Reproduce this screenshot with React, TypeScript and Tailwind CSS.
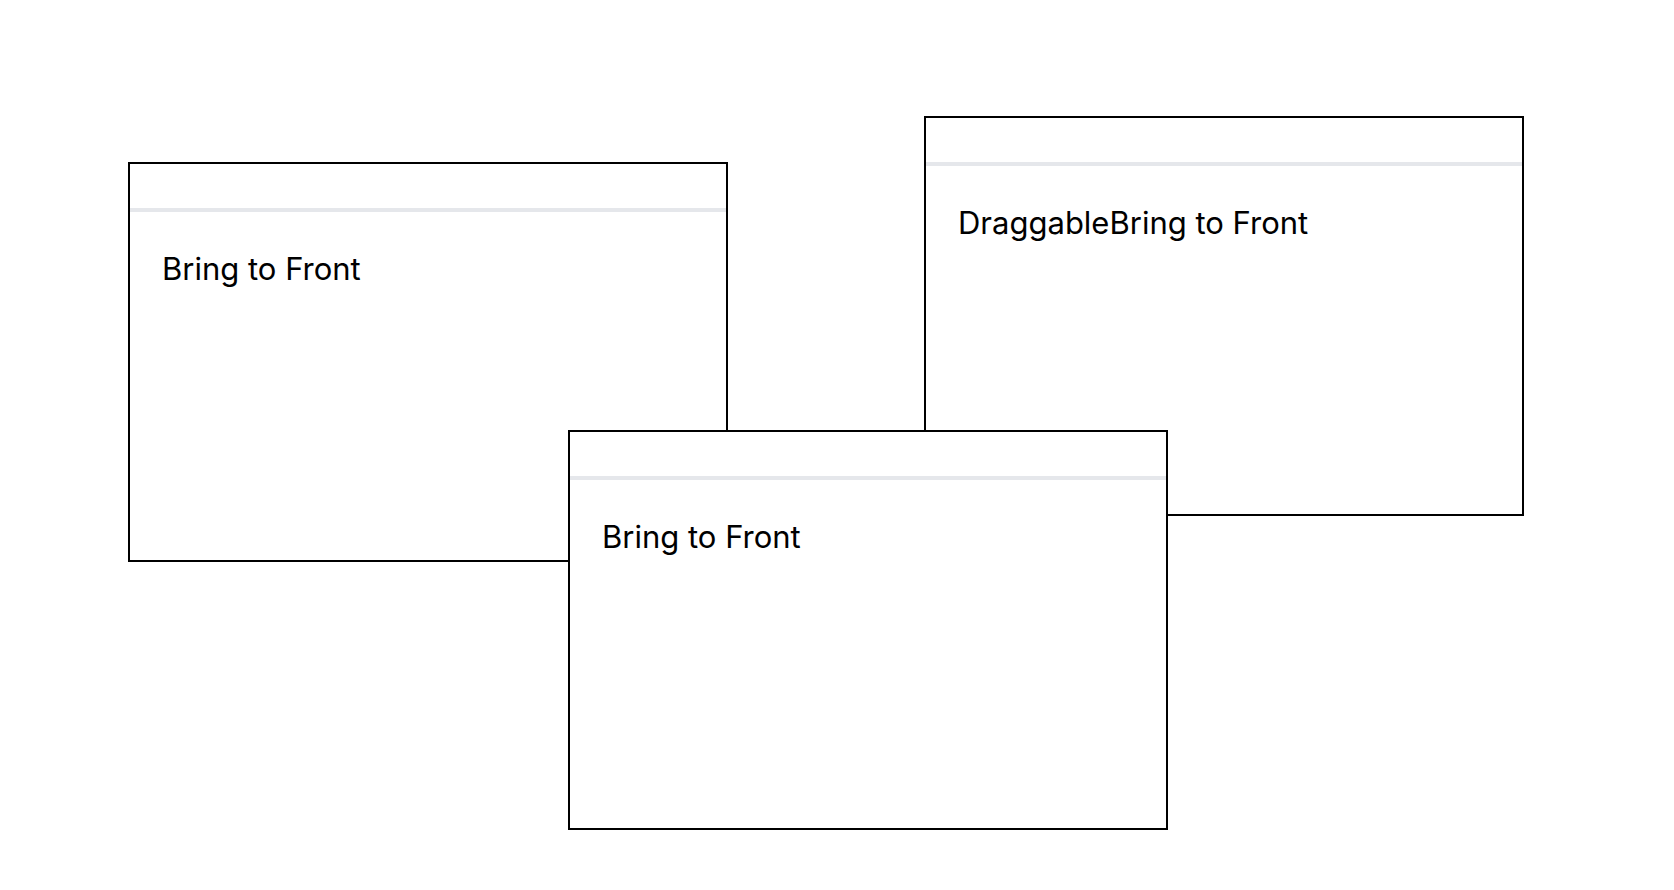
import { useRef, useState } from "react";
import type { PointerEvent } from "react";

type Panel = { id: string; label: string; x: number; y: number; draggable: boolean };

const initialPanels: Panel[] = [
  { id: "left", label: "", x: 128, y: 162, draggable: false },
  { id: "right", label: "Draggable", x: 924, y: 116, draggable: true },
  { id: "center", label: "", x: 568, y: 430, draggable: false },
];

type WindowProps = {
  panel: Panel;
  zIndex: number;
  onFront: () => void;
  onMove: (dx: number, dy: number) => void;
};

function Window({ panel, zIndex, onFront, onMove }: WindowProps) {
  const last = useRef<{ x: number; y: number } | null>(null);

  const start = (e: PointerEvent<HTMLElement>) => {
    if (!panel.draggable) return;
    e.currentTarget.setPointerCapture(e.pointerId);
    last.current = { x: e.clientX, y: e.clientY };
  };
  const move = (e: PointerEvent<HTMLElement>) => {
    if (!last.current) return;
    onMove(e.clientX - last.current.x, e.clientY - last.current.y);
    last.current = { x: e.clientX, y: e.clientY };
  };
  const end = () => {
    last.current = null;
  };

  return (
    <section
      className="absolute flex h-[400px] w-[600px] flex-col border-2 border-black bg-white"
      style={{ left: panel.x, top: panel.y, zIndex }}
    >
      <header
        className="h-12 shrink-0 border-b-4 border-gray-200"
        onPointerDown={start}
        onPointerMove={move}
        onPointerUp={end}
      />
      <div className="flex items-start p-8">
        {panel.label && <span>{panel.label}</span>}
        <button type="button" onClick={onFront}>
          Bring to Front
        </button>
      </div>
    </section>
  );
}

export default function App() {
  const [panels, setPanels] = useState(initialPanels);
  const [order, setOrder] = useState(initialPanels.map((p) => p.id));

  const bringToFront = (id: string) => setOrder((o) => [...o.filter((v) => v !== id), id]);
  const movePanel = (id: string, dx: number, dy: number) =>
    setPanels((all) => all.map((p) => (p.id === id ? { ...p, x: p.x + dx, y: p.y + dy } : p)));

  return (
    <main className="relative min-h-screen overflow-hidden bg-white font-['Inter',sans-serif] text-[31px] leading-[50px] text-black">
      {panels.map((panel) => (
        <Window
          key={panel.id}
          panel={panel}
          zIndex={order.indexOf(panel.id)}
          onFront={() => bringToFront(panel.id)}
          onMove={(dx, dy) => movePanel(panel.id, dx, dy)}
        />
      ))}
    </main>
  );
}
